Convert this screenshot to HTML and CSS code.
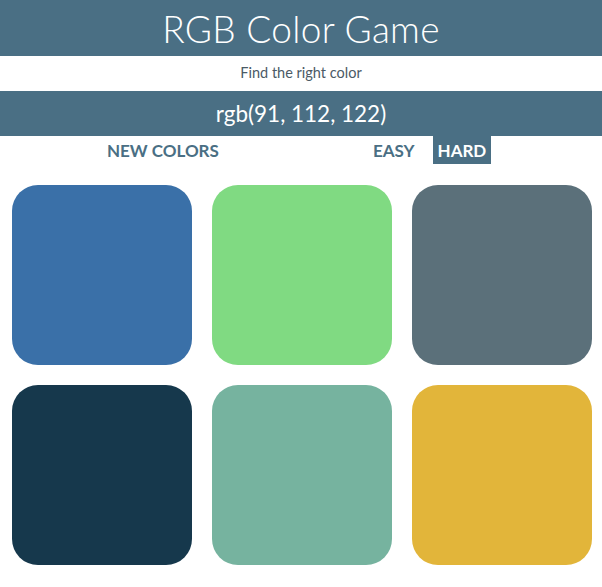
FILE: index.html
```html
<!DOCTYPE html>
<html>
<head>
<meta charset="utf-8">
<link rel="stylesheet" href="styles.css">
</head>
<body>
<header class="header">
  <h1 class="title">RGB Color Game</h1>
</header>
<div class="subtitle">Find the right color</div>
<div class="target">rgb(91, 112, 122)</div>
<div class="controls">
  <button class="btn btn-new">NEW COLORS</button>
  <button class="btn btn-easy">EASY</button>
  <button class="btn btn-hard selected">HARD</button>
</div>
<main class="grid">
  <div class="square sq-blue"></div>
  <div class="square sq-green"></div>
  <div class="square sq-gray"></div>
  <div class="square sq-dark"></div>
  <div class="square sq-teal"></div>
  <div class="square sq-yellow"></div>
</main>
</body>
</html>
```
FILE: styles.css
```css
* { box-sizing: border-box; }
body {
  margin: 0;
  background: #fff;
  font-family: Lato, "Open Sans", sans-serif;
}
.header {
  background: #4a6f84;
  height: 56px;
  display: flex;
  align-items: center;
  justify-content: center;
}
.title {
  margin: 0;
  color: #fff;
  font-weight: 300;
  font-size: 37px;
  line-height: 1;
  letter-spacing: 0.3px;
}
.subtitle {
  height: 35px;
  display: flex;
  align-items: center;
  justify-content: center;
  font-size: 14.5px;
  color: #4b5a66;
  padding-bottom: 2px;
}
.target {
  background: #4a6f84;
  height: 45px;
  display: flex;
  align-items: center;
  justify-content: center;
  color: #fff;
  font-size: 22.5px;
}
.controls {
  height: 28px;
  display: flex;
  align-items: stretch;
  padding-left: 100px;
}
.btn {
  border: none;
  background: transparent;
  font-family: Lato, "Open Sans", sans-serif;
  font-size: 17px;
  font-weight: 700;
  color: #4a6f84;
  padding: 0 7px;
  margin: 0;
  cursor: pointer;
}
.btn-easy { margin-left: 140px; }
.btn-hard { margin-left: 11px; padding: 0 5px; }
.btn.selected {
  background: #4a6f84;
  color: #fff;
}
.grid {
  display: grid;
  grid-template-columns: repeat(3, 180px);
  grid-auto-rows: 180px;
  column-gap: 20px;
  row-gap: 20px;
  padding: 21px 0 0 12px;
}
.square { border-radius: 26px; }
.sq-blue { background: #3a70a8; }
.sq-green { background: #80da82; }
.sq-gray { background: #5b707a; }
.sq-dark { background: #16384c; }
.sq-teal { background: #76b39f; }
.sq-yellow { background: #e2b53a; }
```
